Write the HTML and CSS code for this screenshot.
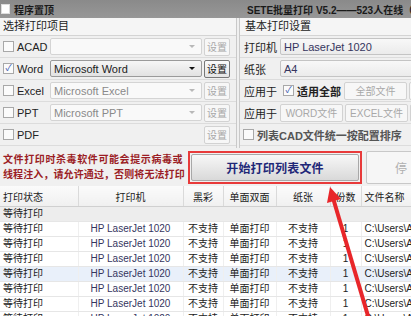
FILE: index.html
```html
<!DOCTYPE html>
<html lang="zh-CN">
<head>
  <meta charset="UTF-8" />
  <title>SETE批量打印</title>
  <link rel="stylesheet" href="styles.css">
</head>
<body>

  <div class="titlebar">
    <span class="tb-check"></span>
    <span class="tb-left">程序置顶</span>
    <span class="tb-title">SETE批量打印 V5.2——523人在线（总</span>
  </div>

  <div class="panels">
    <div class="panel left">
      <div class="caption">选择打印项目</div>
      <div class="group">
        <div class="row">
          <span class="check"></span><span class="item">ACAD</span>
          <div class="combo off"><span></span><i class="arrow"></i></div>
          <button class="btn off">设置</button>
        </div>
        <div class="row">
          <span class="check on">✓</span><span class="item">Word</span>
          <div class="combo active"><span>Microsoft Word</span><i class="arrow"></i></div>
          <button class="btn">设置</button>
        </div>
        <div class="row">
          <span class="check"></span><span class="item">Excel</span>
          <div class="combo off"><span>Microsoft Excel</span><i class="arrow"></i></div>
          <button class="btn off">设置</button>
        </div>
        <div class="row">
          <span class="check"></span><span class="item">PPT</span>
          <div class="combo off"><span>Microsoft PPT</span><i class="arrow"></i></div>
          <button class="btn off">设置</button>
        </div>
        <div class="row">
          <span class="check"></span><span class="item">PDF</span>
          <div class="combo blank"></div>
          <button class="btn off">设置</button>
        </div>
      </div>
    </div>

    <div class="panel right">
      <div class="caption">基本打印设置</div>
      <div class="group">
        <div class="row">
          <span class="label">打印机</span>
          <div class="combo wide"><span class="printer">HP LaserJet 1020</span></div>
        </div>
        <div class="row">
          <span class="label">纸张</span>
          <div class="combo wide"><span class="printer">A4</span></div>
        </div>
        <div class="row">
          <span class="label">应用于</span>
          <span class="check on">✓</span><span class="strong">适用全部</span>
          <button class="btn off file">全部文件</button>
          <button class="btn off file">&nbsp;</button>
        </div>
        <div class="row">
          <span class="label">应用于</span>
          <button class="btn off file">WORD文件</button>
          <button class="btn off file">EXCEL文件</button>
          <button class="btn off file">&nbsp;</button>
        </div>
        <div class="row">
          <span class="check"></span><span class="sort">列表CAD文件统一按配置排序</span>
        </div>
      </div>
    </div>
  </div>

  <div class="actions">
    <p class="warning"><span class="line-one">文件打印时杀毒软件可能会提示病毒或</span><br>线程注入，请允许通过，否则将无法打印</p>
    <div class="highlight">
      <button class="start">开始打印列表文件</button>
    </div>
    <button class="stop">停</button>
  </div>

  <table class="jobs">
    <colgroup>
      <col style="width:78px"><col style="width:105px"><col style="width:40px"><col style="width:53px">
      <col style="width:54px"><col style="width:31px"><col style="width:60px">
    </colgroup>
    <thead>
      <tr><th class="l">打印状态</th><th>打印机</th><th>黑彩</th><th>单面双面</th><th>纸张</th><th>份数</th><th class="l">文件名称</th></tr>
    </thead>
    <tbody id="rows">
      <tr class="group-row"><td class="l">等待打印</td><td></td><td></td><td></td><td></td><td></td><td></td></tr>
    </tbody>
  </table>

  <svg class="arrow-mark" width="411" height="316" viewBox="0 0 411 316">
    <line x1="333" y1="198" x2="371" y2="326" stroke="#e8262a" stroke-width="4"/>
    <polygon points="330,187 341,199 327,203" fill="#e8262a"/>
  </svg>

  <script>
    const body = document.getElementById("rows");
    for (let i = 0; i < 7; i++) {
      const tr = document.createElement("tr");
      if (i === 3) tr.classList.add("selected");
      tr.innerHTML = `<td class="l">等待打印</td><td class="printer">HP LaserJet 1020</td><td>不支持</td><td>单面打印</td><td>不支持</td><td>1</td><td class="l">C:\\Users\\Administrator</td>`;
      body.appendChild(tr);
    }
  </script>

</body>
</html>
```

FILE: styles.css
```css
body {
  margin: 0;
  width: 411px;
  height: 316px;
  overflow: hidden;
  position: relative;
  background: #f0f0f0;
  font-family: "Liberation Sans", "Noto Sans CJK SC", sans-serif;
  font-size: 10px;
  color: #222;
}
.titlebar {
  height: 18px;
  background: linear-gradient(#8a8a8a, #979797);
  display: flex;
  align-items: center;
  white-space: nowrap;
  overflow: hidden;
  font-weight: bold;
  color: #1a1a1a;
}
.tb-check {
  flex-shrink: 0;
  width: 7px;
  height: 8px;
  margin-left: 1px;
  background: #fff;
  border: 1px solid #ddd;
}
.tb-left {
  margin-left: 4px;
}
.tb-title {
  margin-left: 193px;
}
.panels {
  display: flex;
  height: 130px;
}
.panel {
  overflow: hidden;
}
.left {
  width: 236px;
  flex-shrink: 0;
  border-right: 1px solid #c9c9c9;
}
.right {
  flex: 1;
  min-width: 0;
  margin-left: 2px;
  border-left: 1px solid #c9c9c9;
}
.caption {
  height: 17px;
  line-height: 17px;
  padding-left: 3px;
  font-size: 11px;
  background: #f5f5f5;
  border-bottom: 1px solid #d4d4d4;
  white-space: nowrap;
}
.right .caption {
  padding-left: 5px;
}
.row {
  height: 21px;
  display: flex;
  align-items: center;
  white-space: nowrap;
  border-bottom: 1px solid #dcdcdc;
}
.row > * {
  flex-shrink: 0;
}
.check {
  width: 9px;
  height: 9px;
  margin-left: 3px;
  border: 1px solid #a8a8a8;
  background: #fbfbfb;
  font-size: 9px;
  line-height: 9px;
  text-align: center;
  color: #3a55b0;
}
.item {
  width: 33px;
  margin-left: 3px;
  font-size: 11px;
}
.combo {
  width: 152px;
  height: 17px;
  border: 1px solid #d4d4d4;
  border-radius: 2px;
  background: #f9f9f9;
  display: flex;
  align-items: center;
  padding-left: 3px;
  box-sizing: border-box;
  font-size: 11px;
}
.combo span {
  flex: 1;
}
.combo.off {
  color: #8a8a8a;
}
.combo.active {
  border-color: #9a9a9a;
  background: linear-gradient(#f6f6f6, #e2e2e2);
}
.combo.blank {
  visibility: hidden;
}
.arrow {
  width: 0;
  height: 0;
  margin-right: 6px;
  border-left: 3px solid transparent;
  border-right: 3px solid transparent;
  border-top: 3px solid #b8b8b8;
}
.active .arrow {
  border-top-color: #111;
}
.btn {
  margin-left: 2px;
  width: 26px;
  height: 18px;
  padding: 0;
  font-family: inherit;
  font-size: 10px;
  border: 1px solid #777;
  border-radius: 2px;
  background: linear-gradient(#fafafa, #e4e4e4);
  color: #111;
}
.btn.off {
  border-color: #d2d2d2;
  background: #f7f7f7;
  color: #a8a8a8;
}
.label {
  width: 36px;
  margin-left: 4px;
  font-size: 11px;
}
.combo.wide {
  width: 150px;
  border-color: #c4c4c4;
  background: linear-gradient(#f8f8f8, #ebebeb);
}
.printer {
  color: #35355e;
}
.right .label + .check {
  margin-left: 3px;
}
.strong {
  margin-left: 3px;
  width: 45px;
  font-weight: bold;
  font-size: 11px;
}
.btn.file {
  width: 63px;
  margin-left: 2px;
  font-size: 10px;
}
.label + .btn.file {
  margin-left: 0;
}
.sort {
  margin-left: 3px;
  font-weight: bold;
  font-size: 11px;
  color: #555;
}
.actions {
  display: flex;
  height: 38px;
  align-items: center;
}
.warning {
  width: 187px;
  flex-shrink: 0;
  margin: 0;
  padding-left: 3px;
  box-sizing: border-box;
  font-size: 10px;
  letter-spacing: 0.1px;
  line-height: 15px;
  font-weight: bold;
  color: #9b1d25;
  white-space: nowrap;
  overflow: hidden;
}
.line-one {
  letter-spacing: 0.6px;
}
.highlight {
  flex-shrink: 0;
  margin-left: 1px;
  width: 174px;
  height: 33px;
  border: 2px solid #e83a3a;
  box-sizing: border-box;
  padding: 1px;
}
.start {
  width: 100%;
  height: 100%;
  border: 1px solid #a8a8a8;
  border-radius: 2px;
  background: linear-gradient(#f7f7f7, #d9d9d9);
  font-family: inherit;
  font-size: 12px;
  font-weight: bold;
  color: #1f2878;
  letter-spacing: 0.2px;
}
.stop {
  flex-shrink: 0;
  margin-left: 4px;
  width: 60px;
  height: 33px;
  border: 1px solid #c8c8c8;
  border-radius: 2px;
  background: #f6f6f6;
  font-family: inherit;
  font-size: 12px;
  color: #b0b0b0;
  text-align: left;
  padding-left: 28px;
}
.jobs {
  border-collapse: collapse;
  table-layout: fixed;
  width: 421px;
  background: #fff;
}
.jobs th {
  height: 20px;
  font-weight: normal;
  font-size: 10px;
  background: linear-gradient(#fbfbfb, #f0f0f0);
  border-right: 1px solid #dadada;
  border-bottom: 1px solid #d0d0d0;
  text-align: center;
  padding: 0;
}
.jobs td {
  height: 14px;
  padding: 0;
  font-size: 10px;
  line-height: 14px;
  text-align: center;
  white-space: nowrap;
  overflow: hidden;
  border-right: 1px solid #efefef;
  border-bottom: 1px solid #e6e6e6;
}
.jobs .l {
  text-align: left;
  padding-left: 3px;
}
.jobs td.printer {
  color: #35355e;
}
.group-row td {
  background: #ededed;
  border-right: none;
}
.selected td {
  background: #e9f0fa;
}
.arrow-mark {
  position: absolute;
  left: 0;
  top: 0;
  pointer-events: none;
}
```
